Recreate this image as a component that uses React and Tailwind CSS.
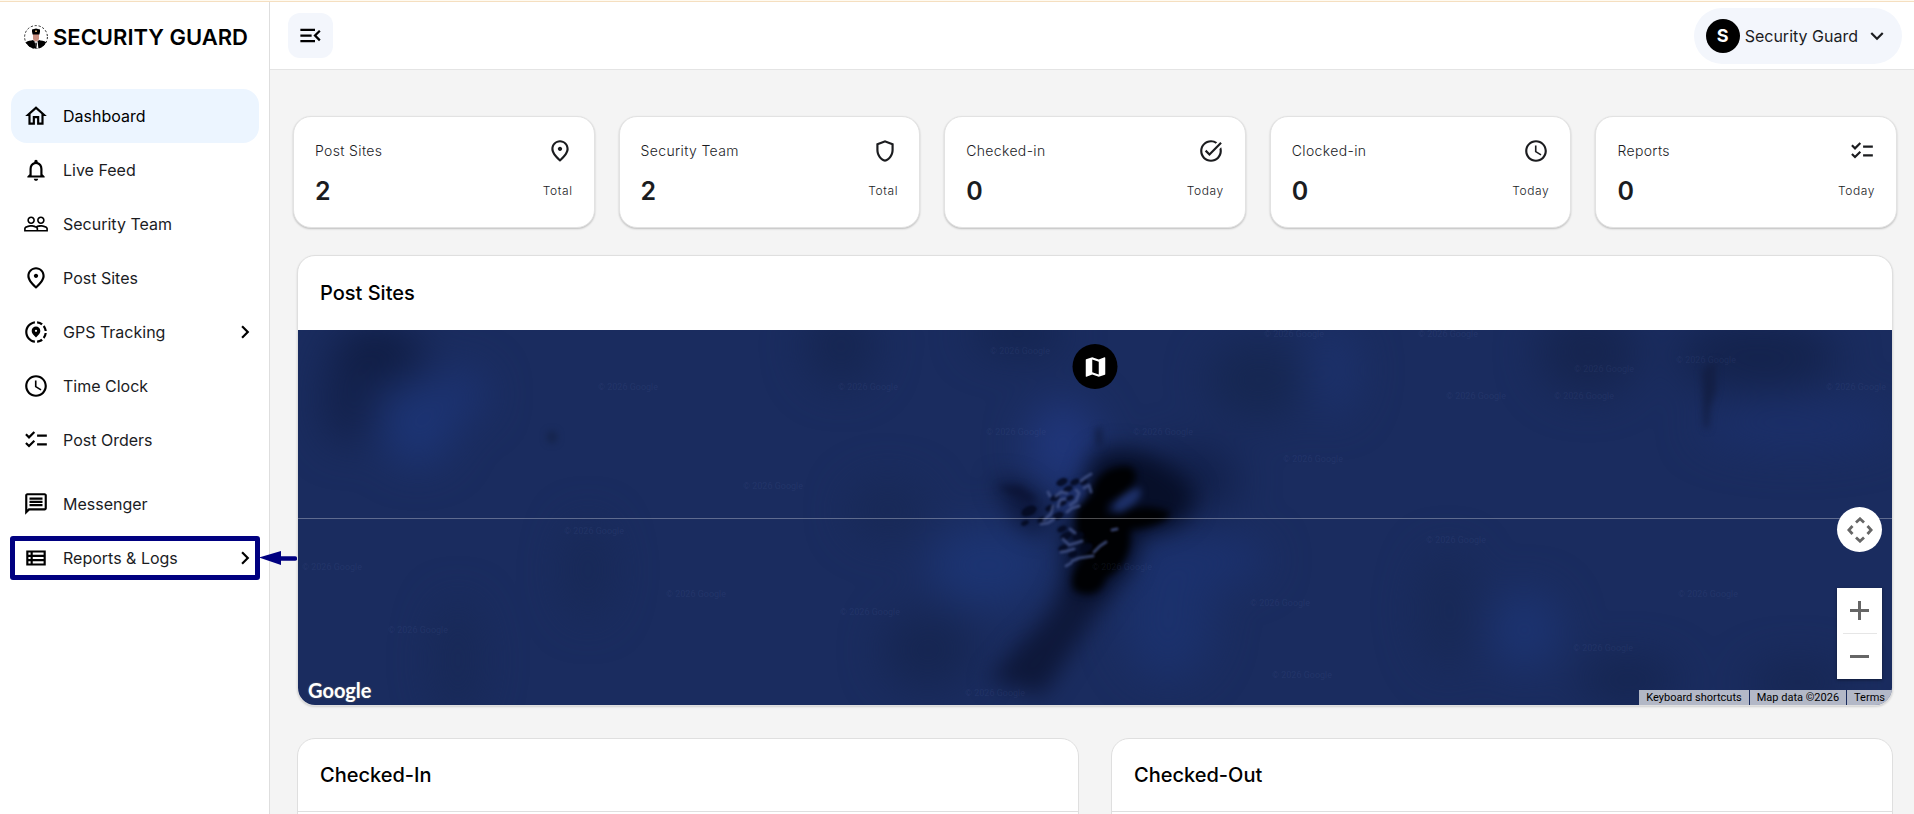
import {
  MdOutlineHome,
  MdNotificationsNone,
  MdPeopleOutline,
  MdOutlinePlace,
  MdShareLocation,
  MdAccessTime,
  MdChecklist,
  MdOutlineMessage,
  MdOutlineViewList,
  MdChevronRight,
  MdExpandMore,
  MdMenuOpen,
  MdOutlineShield,
  MdTaskAlt,
  MdMap,
} from 'react-icons/md';

const navItems = [
  { label: 'Dashboard', icon: MdOutlineHome, active: true },
  { label: 'Live Feed', icon: MdNotificationsNone },
  { label: 'Security Team', icon: MdPeopleOutline },
  { label: 'Post Sites', icon: MdOutlinePlace },
  { label: 'GPS Tracking', icon: MdShareLocation, expandable: true },
  { label: 'Time Clock', icon: MdAccessTime },
  { label: 'Post Orders', icon: MdChecklist },
];

const secondaryItems = [
  { label: 'Messenger', icon: MdOutlineMessage },
  { label: 'Reports & Logs', icon: MdOutlineViewList, expandable: true, highlighted: true },
];

const stats = [
  { label: 'Post Sites', value: 2, note: 'Total', icon: MdOutlinePlace },
  { label: 'Security Team', value: 2, note: 'Total', icon: MdOutlineShield },
  { label: 'Checked-in', value: 0, note: 'Today', icon: MdTaskAlt },
  { label: 'Clocked-in', value: 0, note: 'Today', icon: MdAccessTime },
  { label: 'Reports', value: 0, note: 'Today', icon: MdChecklist },
];

function GuardLogo() {
  return (
    <svg viewBox="0 0 24 24" className="size-6 shrink-0" aria-hidden="true">
      <circle cx="12" cy="12" r="11.4" fill="#fff" stroke="#111" strokeWidth="0.9" strokeDasharray="2.2 1.8" />
      <path d="M1.8 17.2C4 15.8 7 15.6 9 15l3 2.4 3-2.4c2 .6 5 .8 7.2 2.2A11.4 11.4 0 0 1 12 23.6 11.4 11.4 0 0 1 1.8 17.2Z" fill="#000" />
      <path d="M9 9h6v4.2c0 1.6-1.3 3.2-3 3.2s-3-1.6-3-3.2Z" fill="#c98f80" />
      <path d="M8 4.6 12 3.6l4 1v2.2l-.6 2.6H8.6L8 6.800Z" fill="#000" />
      <path d="M11 5.600h2v1.400h-2Z" fill="#c9a46a" />
      <path d="M10.400 16.200 12 17.600l1.600-1.400.8 7.200h-2Z" fill="#fff" />
      <path d="m12 17.400.9 1-.5 4.600h-.7l-.5-4.600Z" fill="#000" />
    </svg>
  );
}

function HighlightMarker() {
  return (
    <>
      <span className="pointer-events-none absolute -inset-x-px inset-y-[5px] rounded-[3px] border-5 border-[#000080]" />
      <svg viewBox="0 0 38 14" className="pointer-events-none absolute top-1/2 left-full h-3.5 w-[38px] -translate-y-1/2" aria-hidden="true">
        <path d="M0 6.500 22 0v14Z" fill="#000080" />
        <path d="M20 7.500h16" stroke="#000080" strokeWidth="4.500" strokeLinecap="round" />
      </svg>
    </>
  );
}

function NavItem({ label, icon: Icon, active, expandable, highlighted }) {
  return (
    <li className="relative">
      <a
        href="#"
        aria-current={active ? 'page' : undefined}
        className={`flex h-[54px] items-center gap-3.5 rounded-2xl pr-[1px] pl-3 ${active ? 'bg-[#ecf5ff] text-black' : 'text-[#1b1c1f]'}`}
      >
        <Icon className="size-[26px] shrink-0 text-black" />
        <span className="flex-1 text-base">{label}</span>
        {expandable && <MdChevronRight className="size-[26px] text-black" />}
      </a>
      {highlighted && <HighlightMarker />}
    </li>
  );
}

function Sidebar() {
  return (
    <aside className="relative z-10 flex w-[270px] shrink-0 flex-col border-r border-[#dedede] bg-white">
      <a href="#" className="flex h-[69px] items-center gap-[5px] pl-6">
        <GuardLogo />
        <span className="text-[22px] leading-6 font-semibold whitespace-nowrap text-black">SECURITY GUARD</span>
      </a>
      <nav className="pt-[18px] pr-2.5 pl-[11px]">
        <ul>
          {navItems.map((item) => (
            <NavItem key={item.label} {...item} />
          ))}
        </ul>
        <ul className="mt-2.5">
          {secondaryItems.map((item) => (
            <NavItem key={item.label} {...item} />
          ))}
        </ul>
      </nav>
    </aside>
  );
}

function Header() {
  return (
    <header className="flex h-[68px] shrink-0 items-center justify-between border-b border-[#e4e4e4] bg-white pr-3 pl-[18px]">
      <button type="button" aria-label="Collapse menu" className="flex size-[45px] items-center justify-center rounded-xl bg-[#f3f6fc] text-black">
        <MdMenuOpen className="size-[27px]" />
      </button>
      <button type="button" className="flex h-14 items-center rounded-full bg-[#f3f6fc] px-3 text-[#1b1c1f]">
        <span className="flex size-[34px] items-center justify-center rounded-full bg-black text-lg font-bold text-white">S</span>
        <span className="ml-[5px] text-base">Security Guard</span>
        <MdExpandMore className="ml-1.5 size-[26px]" />
      </button>
    </header>
  );
}

function StatCard({ label, value, note, icon: Icon }) {
  return (
    <article className="flex flex-col gap-3 rounded-[18px] border border-[#e2e2e2] bg-white px-[21px] pt-5 pb-[21px] text-[#1b1c1f] shadow-[0_1px_2px_rgba(0,0,0,0.22)]">
      <div className="flex h-[27px] items-center justify-between">
        <h3 className="text-sm font-light tracking-wide">{label}</h3>
        <Icon className="size-[26px]" />
      </div>
      <div className="flex h-[30px] items-center justify-between">
        <p className="text-[25px] leading-[30px] font-semibold">{value}</p>
        <p className="text-xs font-light tracking-wider">{note}</p>
      </div>
    </article>
  );
}

const patches = [
  { cx: 80, cy: 24, rx: 46, ry: 26, fill: '#0f1c42' },
  { cx: 50, cy: 70, rx: 26, ry: 46, fill: '#13214b' },
  { cx: 120, cy: 95, rx: 36, ry: 40, fill: '#1c3474' },
  { cx: 160, cy: 64, rx: 30, ry: 26, fill: '#1c3270' },
  { cx: 543, cy: 16, rx: 36, ry: 40, fill: '#162652' },
  { cx: 720, cy: 4, rx: 46, ry: 20, fill: '#14244f' },
  { cx: 960, cy: 50, rx: 50, ry: 40, fill: '#162752' },
  { cx: 1034, cy: 40, rx: 26, ry: 46, fill: '#1c316b' },
  { cx: 1290, cy: 22, rx: 50, ry: 44, fill: '#162550' },
  { cx: 1460, cy: 26, rx: 80, ry: 34, fill: '#14234d' },
  { cx: 1500, cy: 96, rx: 100, ry: 26, fill: '#1b2f69' },
  { cx: 1227, cy: 300, rx: 36, ry: 40, fill: '#1c3370' },
  { cx: 1150, cy: 280, rx: 30, ry: 60, fill: '#182957' },
  { cx: 870, cy: 290, rx: 46, ry: 60, fill: '#1b316c' },
  { cx: 690, cy: 235, rx: 60, ry: 40, fill: '#1c3472' },
  { cx: 900, cy: 230, rx: 70, ry: 26, fill: '#1b316e' },
  { cx: 765, cy: 115, rx: 36, ry: 44, fill: '#20367a' },
  { cx: 630, cy: 320, rx: 46, ry: 40, fill: '#162652' },
  { cx: 160, cy: 330, rx: 24, ry: 60, fill: '#182957' },
  { cx: 290, cy: 240, rx: 24, ry: 50, fill: '#182957' },
  { cx: 1330, cy: 350, rx: 50, ry: 22, fill: '#152550' },
  { cx: 590, cy: 180, rx: 40, ry: 30, fill: '#182957' },
  { cx: 890, cy: 150, rx: 50, ry: 34, fill: '#12204a' },
  { cx: 1500, cy: 352, rx: 50, ry: 20, fill: '#162652' },
];

const watermarks = [
  [722, 24], [996, 7], [1150, 7], [330, 60], [570, 60], [1306, 42], [1408, 33], [1558, 60],
  [1178, 69], [1286, 69], [718, 105], [865, 105], [1015, 132], [475, 159], [296, 204], [1158, 213],
  [34, 240], [824, 240], [398, 267], [1410, 267], [982, 276], [572, 285], [120, 303], [1305, 321],
  [1004, 348], [697, 366],
];

const ridges = [
  'M758 166 763 162 769 163', 'M760 177 762 170 767 169', 'M778 160 781 163 778 171 772 175',
  'M783 151 788 147 793 144', 'M786 158 791 155 793 162', 'M750 162 752 166', 'M755 176 753 184 746 190',
  'M769 182 774 178 781 176', 'M743 194 750 193 756 189', 'M772 199 777 203', 'M765 209 771 215 778 213 784 211',
  'M763 222 769 221 776 219', 'M774 231 781 228 788 227 795 226', 'M796 222 802 216 808 212', 'M768 236 773 233',
  'M814 200 819 199',
];

const pits = [
  [764, 152, 6], [777, 152, 5], [770, 159, 5], [786, 152, 4], [757, 168, 5], [765, 173, 4], [772, 168, 4],
  [752, 178, 5], [760, 186, 6], [731, 181, 8], [744, 190, 5], [764, 199, 5], [768, 206, 6], [780, 206, 6],
  [765, 218, 5], [775, 224, 5], [788, 218, 7], [727, 193, 4],
];

function SatelliteImagery() {
  return (
    <svg viewBox="0 0 1594 375" preserveAspectRatio="xMidYMid slice" className="absolute inset-0 size-full" aria-hidden="true">
      <defs>
        <filter id="haze" x="-80%" y="-80%" width="260%" height="260%" colorInterpolationFilters="sRGB">
          <feGaussianBlur stdDeviation="20" />
        </filter>
        <filter id="soft" x="-60%" y="-60%" width="220%" height="220%" colorInterpolationFilters="sRGB">
          <feGaussianBlur stdDeviation="11" />
        </filter>
        <filter id="edge" x="-60%" y="-60%" width="220%" height="220%" colorInterpolationFilters="sRGB">
          <feGaussianBlur stdDeviation="3.5" />
        </filter>
        <filter id="fine" x="-60%" y="-60%" width="220%" height="220%" colorInterpolationFilters="sRGB">
          <feGaussianBlur stdDeviation="1.3" />
        </filter>
      </defs>
      <rect width="1594" height="375" fill="#1a2c5f" />
      <g filter="url(#haze)">
        {patches.map((p) => (
          <ellipse key={`${p.cx}-${p.cy}`} {...p} />
        ))}
      </g>
      <g filter="url(#soft)">
        <path d="M770 235C765 260 755 285 720 315L690 350 745 365 785 305 815 260Z" fill="#0e183a" />
        <path d="M796 124C830 110 866 126 896 158 900 190 876 200 844 204L832 240 804 268 770 266 768 200Z" fill="#070f29" />
        <path d="M694 150C715 144 737 158 750 178L744 206 720 194Z" fill="#0d183d" />
      </g>
      <g filter="url(#edge)">
        <path d="M700 156 722 156 738 168 732 174 712 164Z" fill="#0c1538" />
        <ellipse cx="254" cy="107" rx="5" ry="6" fill="#14234a" />
        <path d="M798 100 803 96 804 116 799 116Z" fill="#101c40" />
        <path d="M1404 40 1418 30 1418 60 1412 78 1410 100 1406 96Z" fill="#131f45" />
        <path d="M794 164C796 146 810 136 830 136C844 142 838 154 824 166L810 172 808 184 824 184C838 174 858 176 872 182C872 192 852 198 832 200C834 222 826 238 808 248C804 264 790 268 776 260C770 246 780 232 790 220L778 200 778 180Z" fill="#000103" />
        <path d="M814 180C818 168 828 160 842 158C846 166 836 176 822 182Z" fill="#1d3068" />
        <path d="M764 160 786 150 788 164 774 182 760 180Z" fill="#1d2f68" />
      </g>
      <g filter="url(#fine)">
        {pits.map(([x, y, r]) => (
          <ellipse key={`${x}-${y}`} cx={x} cy={y} rx={r} ry={r * 0.6} fill="#030920" fillOpacity="0.85" transform={`rotate(-25 ${x} ${y})`} />
        ))}
        {ridges.map((d) => (
          <path key={d} d={d} fill="none" stroke="#46568b" strokeOpacity="0.75" strokeWidth="3" strokeLinecap="round" strokeLinejoin="round" />
        ))}
      </g>
      <g fill="#7f92cf" fillOpacity="0.1" fontFamily="Roboto, sans-serif" fontSize="9" textAnchor="middle">
        {watermarks.map(([x, y]) => (
          <text key={`${x}-${y}`} x={x} y={y}>© 2026 Google</text>
        ))}
      </g>
      <path d="M0 188.500H1594" stroke="#fff" strokeOpacity="0.300" />
    </svg>
  );
}

function MapControls() {
  return (
    <div className="absolute right-2.5 bottom-[26px] flex flex-col gap-9">
      <button type="button" aria-label="Map camera controls" className="flex size-[45px] items-center justify-center rounded-full bg-white text-[#666]">
        <svg viewBox="0 0 26 26" className="size-[26px]" fill="none" stroke="currentColor" strokeWidth="2.800" aria-hidden="true">
          <path d="M9 5.500 13 1.800l4 3.700M9 20.500l4 3.700 4-3.700M5.500 9 1.800 13l3.700 4M20.500 9l3.700 4-3.700 4" />
        </svg>
      </button>
      <div className="flex flex-col items-center bg-white text-[#666] shadow-[0_1px_3px_rgba(0,0,0,0.4)]">
        <button type="button" aria-label="Zoom in" className="flex size-[45px] items-center justify-center">
          <svg viewBox="0 0 19 19" className="size-[19px]" stroke="currentColor" strokeWidth="3" aria-hidden="true">
            <path d="M9.500 0v19M0 9.500h19" />
          </svg>
        </button>
        <hr className="w-[34px] border-[#e6e6e6]" />
        <button type="button" aria-label="Zoom out" className="flex size-[45px] items-center justify-center">
          <svg viewBox="0 0 19 19" className="size-[19px]" stroke="currentColor" strokeWidth="3" aria-hidden="true">
            <path d="M0 9.500h19" />
          </svg>
        </button>
      </div>
    </div>
  );
}

function MapPanel() {
  return (
    <section className="overflow-hidden rounded-[18px] border border-[#dfdfdf] bg-white shadow-[0_1px_2px_rgba(0,0,0,0.15)]">
      <h2 className="px-[22px] py-[23px] text-xl leading-7 font-medium text-black">Post Sites</h2>
      <div className="relative h-[375px] overflow-hidden">
        <SatelliteImagery />
        <button type="button" aria-label="Map type" className="absolute top-3.5 left-1/2 flex size-[45px] -translate-x-1/2 items-center justify-center rounded-full bg-black text-white">
          <MdMap className="size-[26px]" />
        </button>
        <MapControls />
        <a href="#" className="absolute bottom-[1px] left-2.5 font-['Lato'] text-xl leading-7 font-bold text-white [text-shadow:0_0_2px_#666]">Google</a>
        <div className="absolute right-0 bottom-0 flex gap-px font-['Roboto'] text-[11px] leading-[15px] text-black">
          <button type="button" className="bg-[#f5f5f5]/70 px-[7px]">Keyboard shortcuts</button>
          <span className="bg-[#f5f5f5]/70 px-[7px]">Map data ©2026</span>
          <a href="#" className="bg-[#f5f5f5]/70 px-[7px]">Terms</a>
        </div>
      </div>
    </section>
  );
}

function ListPanel({ title }) {
  return (
    <section className="rounded-[18px] border border-[#dfdfdf] bg-white">
      <h2 className="border-b border-[#dfdfdf] px-[22px] py-[22px] text-xl leading-7 font-medium text-black">{title}</h2>
      <div className="h-64" />
    </section>
  );
}

export default function App() {
  return (
    <div className="flex h-screen flex-col overflow-hidden bg-[#f4f4f4] font-['Inter',sans-serif]">
      <div className="h-0.5 shrink-0 border-b border-[#f5dfc0] bg-[#fffaf0]" />
      <div className="flex min-h-0 flex-1">
        <Sidebar />
        <div className="flex min-w-0 flex-1 flex-col">
          <Header />
          <main className="flex-1 overflow-y-auto pt-[46px] pr-[17px] pl-[23px] [scrollbar-width:none]">
            <div className="grid grid-cols-5 gap-6">
              {stats.map((stat) => (
                <StatCard key={stat.label} {...stat} />
              ))}
            </div>
            <div className="flex flex-col gap-8 px-1 pt-[27px] pb-8">
              <MapPanel />
              <div className="grid grid-cols-2 gap-8">
                <ListPanel title="Checked-In" />
                <ListPanel title="Checked-Out" />
              </div>
            </div>
          </main>
        </div>
      </div>
    </div>
  );
}
